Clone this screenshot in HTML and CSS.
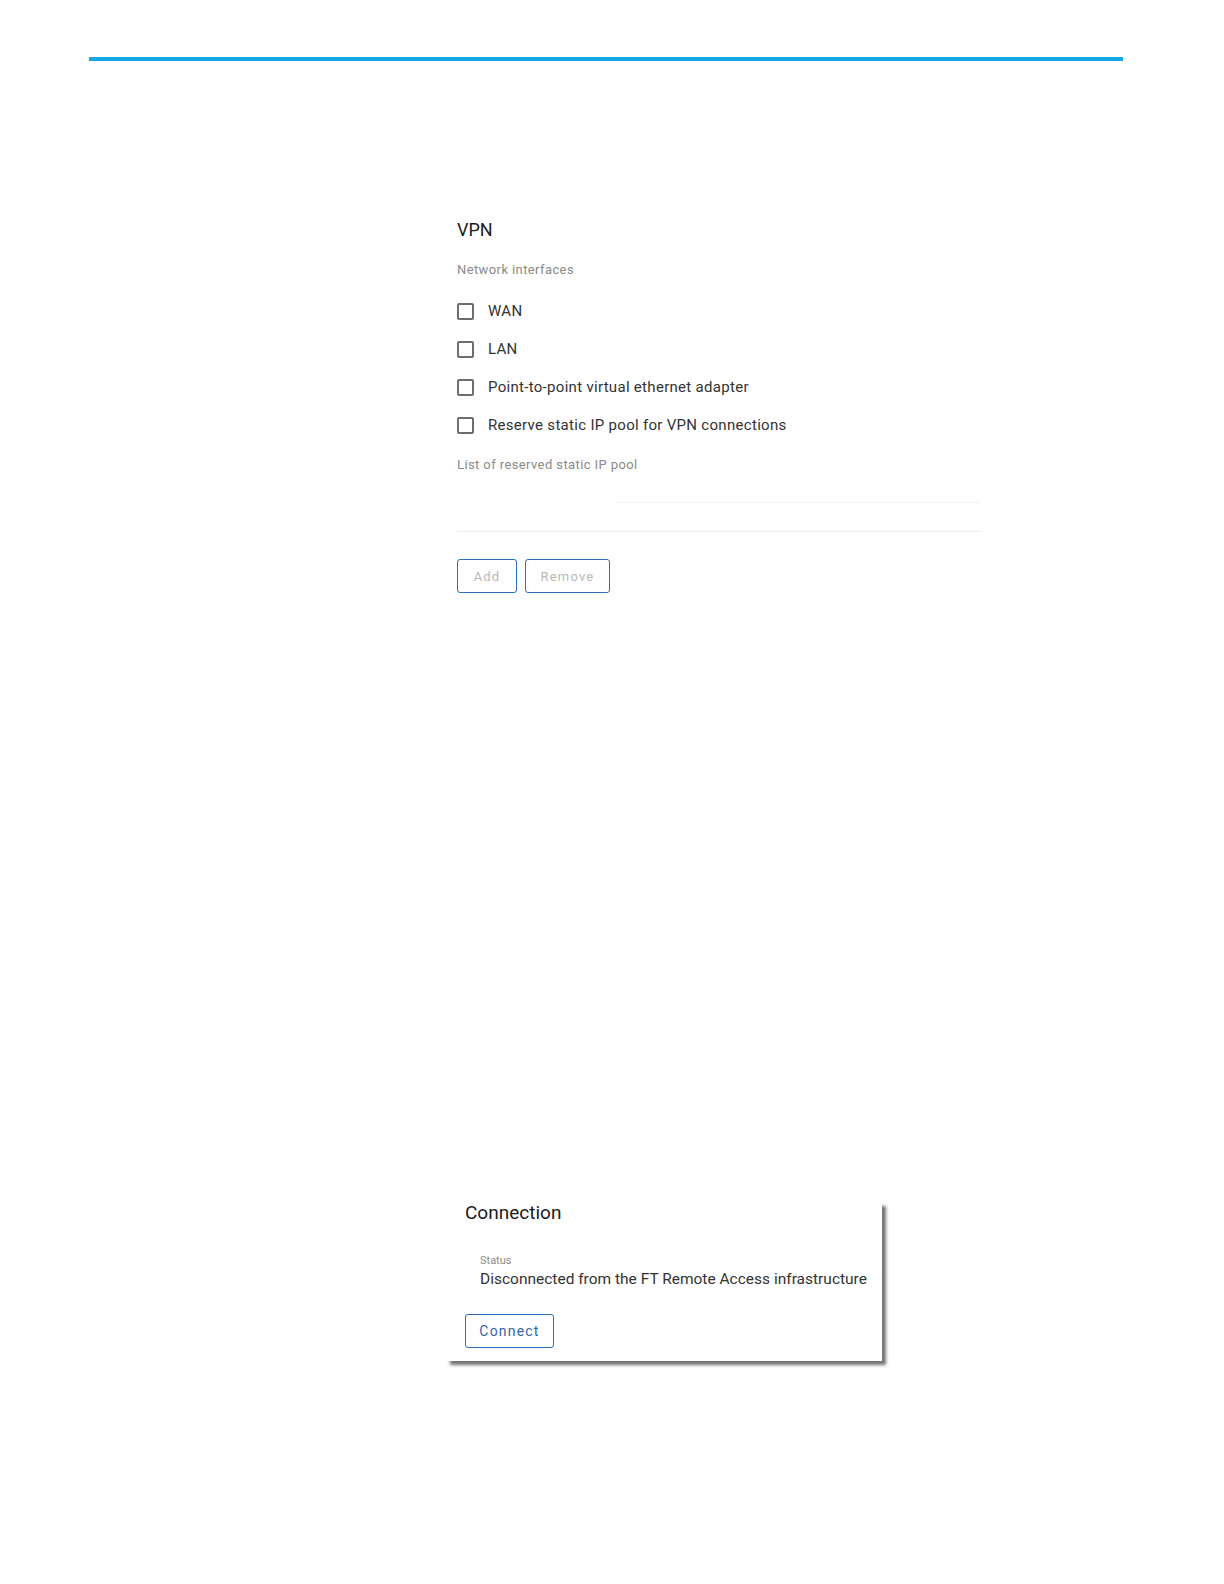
FILE: index.html
```html
<!DOCTYPE html>
<html>
<head>
<meta charset="utf-8">
<link rel="stylesheet" href="styles.css">
</head>
<body>
<div class="page">
<div class="topline"></div>
<section class="vpn">
  <h2 class="vpn-title">VPN</h2>
  <div class="sublabel">Network interfaces</div>
  <ul class="checks">
    <li class="check"><span class="box"></span><span class="check-label">WAN</span></li>
    <li class="check"><span class="box"></span><span class="check-label">LAN</span></li>
    <li class="check"><span class="box"></span><span class="check-label">Point-to-point virtual ethernet adapter</span></li>
    <li class="check"><span class="box"></span><span class="check-label">Reserve static IP pool for VPN connections</span></li>
  </ul>
  <div class="sublabel pool-label">List of reserved static IP pool</div>
  <div class="pool-field">
    <div class="line line-short"></div>
    <div class="line"></div>
  </div>
  <div class="buttons">
    <button class="btn btn-disabled btn-add">Add</button>
    <button class="btn btn-disabled btn-remove">Remove</button>
  </div>
</section>
<section class="conn-card">
  <h2 class="conn-title">Connection</h2>
  <div class="status">
    <div class="status-label">Status</div>
    <div class="status-value">Disconnected from the FT Remote Access infrastructure</div>
  </div>
  <button class="btn btn-connect">Connect</button>
</section>
</div>
</body>
</html>
```
FILE: styles.css
```css
* { box-sizing: border-box; }
html, body { margin: 0; padding: 0; background: #fff; }
body {
  font-family: Roboto, "Liberation Sans", Arial, sans-serif;
  color: #222;
}
.page {
  padding-top: 57px;
  padding-bottom: 100px;
}
.topline {
  margin-left: 89px;
  width: 1034px;
  height: 4px;
  background: #13a8e3;
}
.vpn {
  margin: 157px 0 0 457px;
  width: 524px;
}
.vpn-title {
  margin: 0;
  font-weight: 400;
  font-size: 18px;
  line-height: 24px;
  color: #1c1c1c;
}
.sublabel {
  margin-top: 20px;
  font-size: 13px;
  line-height: 16px;
  color: #8a8a8a;
  letter-spacing: 0.4px;
}
.checks {
  list-style: none;
  margin: 23px 0 0 0;
  padding: 0;
  display: flex;
  flex-direction: column;
  gap: 18px;
}
.check {
  display: flex;
  align-items: center;
  gap: 14px;
  height: 20px;
}
.box {
  width: 17px;
  height: 17px;
  border: 2px solid #6e6e6e;
  border-radius: 2px;
  flex: none;
}
.check-label {
  font-size: 15px;
  line-height: 20px;
  color: #333;
  letter-spacing: 0.3px;
}
.pool-label { margin-top: 22px; }
.pool-field {
  height: 60px;
  padding-top: 29px;
}
.line {
  height: 1px;
  background: #ececec;
  margin-top: 28px;
}
.line-short {
  margin-top: 0;
  margin-left: 158px;
  background: #f3f3f3;
}
.buttons {
  margin-top: 26px;
  display: flex;
  gap: 8px;
}
.btn {
  font-family: Roboto, "Liberation Sans", Arial, sans-serif;
  background: #fff;
  border: 1px solid #2a72b8;
  border-radius: 3px;
  height: 34px;
  font-size: 13px;
  letter-spacing: 1.2px;
  padding: 0;
  cursor: pointer;
}
.btn-disabled { color: #b8b8b8; }
.btn-add { width: 60px; }
.btn-remove { width: 85px; }
.conn-card {
  margin: 609px 0 0 446px;
  width: 436px;
  background: #fff;
  padding: 0 0 13px 19px;
  box-shadow: 4px 4px 3px rgba(0, 0, 0, 0.55);
}
.conn-title {
  margin: 0;
  font-weight: 400;
  font-size: 19px;
  line-height: 22px;
  color: #1a1a1a;
}
.status {
  margin: 31px 0 0 15px;
}
.status-label {
  font-size: 11px;
  line-height: 12px;
  color: #8c8c8c;
}
.status-value {
  font-size: 15.5px;
  line-height: 20px;
  color: #333;
  margin-top: 2px;
  white-space: nowrap;
}
.btn-connect {
  margin-top: 25px;
  width: 89px;
  color: #3465a4;
  font-size: 14px;
}
```
